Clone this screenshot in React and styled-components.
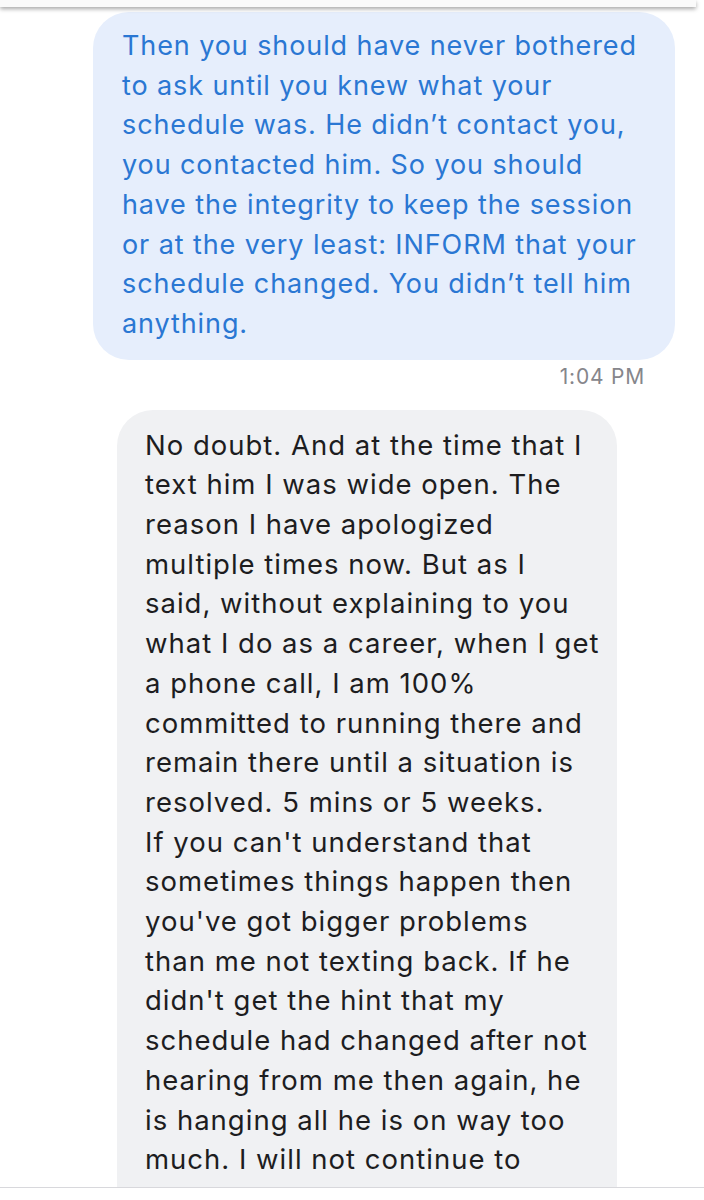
import React from "react";
import styled, { createGlobalStyle } from "styled-components";

const GlobalStyle = createGlobalStyle`
  html, body {
    margin: 0;
    padding: 0;
    background: #ffffff;
  }
  body {
    font-family: Inter, "Open Sans", "Liberation Sans", sans-serif;
  }
`;

const Screen = styled.div`
  width: 704px;
  height: 1200px;
  overflow: hidden;
  display: flex;
  flex-direction: column;
  background: #ffffff;
`;

const TopEdge = styled.div`
  height: 7px;
  flex-shrink: 0;
  background: #fafafa;
  margin-right: 8px;
  box-shadow: 0 2px 4px rgba(0, 0, 0, 0.35);
  position: relative;
  z-index: 1;
`;

const Thread = styled.div`
  flex: 1;
  min-height: 0;
  display: flex;
  flex-direction: column;
  padding: 5px 0 0 0;
  overflow: hidden;
`;

const Row = styled.div`
  display: flex;
  flex-shrink: 0;
  justify-content: ${(p) => (p.$mine ? "flex-end" : "flex-start")};
  padding: ${(p) => (p.$mine ? "0 29px 0 0" : "0 0 0 117px")};
`;

const Bubble = styled.div`
  box-sizing: border-box;
  width: ${(p) => p.$width}px;
  padding: ${(p) => (p.$mine ? "14px 20px 16px 29px" : "16px 20px 60px 28px")};
  border-radius: 36px;
  background: ${(p) => (p.$mine ? "#e6eefc" : "#f0f1f3")};
  color: ${(p) => (p.$mine ? "#2a77d3" : "#1d1d1f")};
  font-size: ${(p) => (p.$mine ? 27 : 27.5)}px;
  line-height: 39.7px;
  letter-spacing: ${(p) => (p.$mine ? 0.9 : 1)}px;
  white-space: nowrap;
`;

const Stamp = styled.div`
  align-self: flex-end;
  margin: 5px 59px 21px 0;
  font-size: 21px;
  line-height: 24px;
  letter-spacing: 0.8px;
  color: #86868b;
`;

const BottomLine = styled.div`
  height: 12px;
  flex-shrink: 0;
  border-top: 1px solid #d8d8dc;
  background: #ffffff;
`;

const Line = ({ children }) => <div>{children}</div>;

const mine = [
  "Then you should have never bothered",
  "to ask until you knew what your",
  "schedule was. He didn’t contact you,",
  "you contacted him. So you should",
  "have the integrity to keep the session",
  "or at the very least: INFORM that your",
  "schedule changed. You didn’t tell him",
  "anything.",
];

const theirs = [
  "No doubt. And at the time that I",
  "text him I was wide open. The",
  "reason I have apologized",
  "multiple times now. But as I",
  "said, without explaining to you",
  "what I do as a career, when I get",
  "a phone call, I am 100%",
  "committed to running there and",
  "remain there until a situation is",
  "resolved. 5 mins or 5 weeks.",
  "If you can't understand that",
  "sometimes things happen then",
  "you've got bigger problems",
  "than me not texting back. If he",
  "didn't get the hint that my",
  "schedule had changed after not",
  "hearing from me then again, he",
  "is hanging all he is on way too",
  "much. I will not continue to",
];

export default function App() {
  return (
    <Screen>
      <GlobalStyle />
      <TopEdge />
      <Thread>
        <Row $mine>
          <Bubble $mine $width={582}>
            {mine.map((t, i) => (
              <Line key={i}>{t}</Line>
            ))}
          </Bubble>
        </Row>
        <Stamp>1:04 PM</Stamp>
        <Row>
          <Bubble $width={500}>
            {theirs.map((t, i) => (
              <Line key={i}>{t}</Line>
            ))}
          </Bubble>
        </Row>
      </Thread>
      <BottomLine />
    </Screen>
  );
}
